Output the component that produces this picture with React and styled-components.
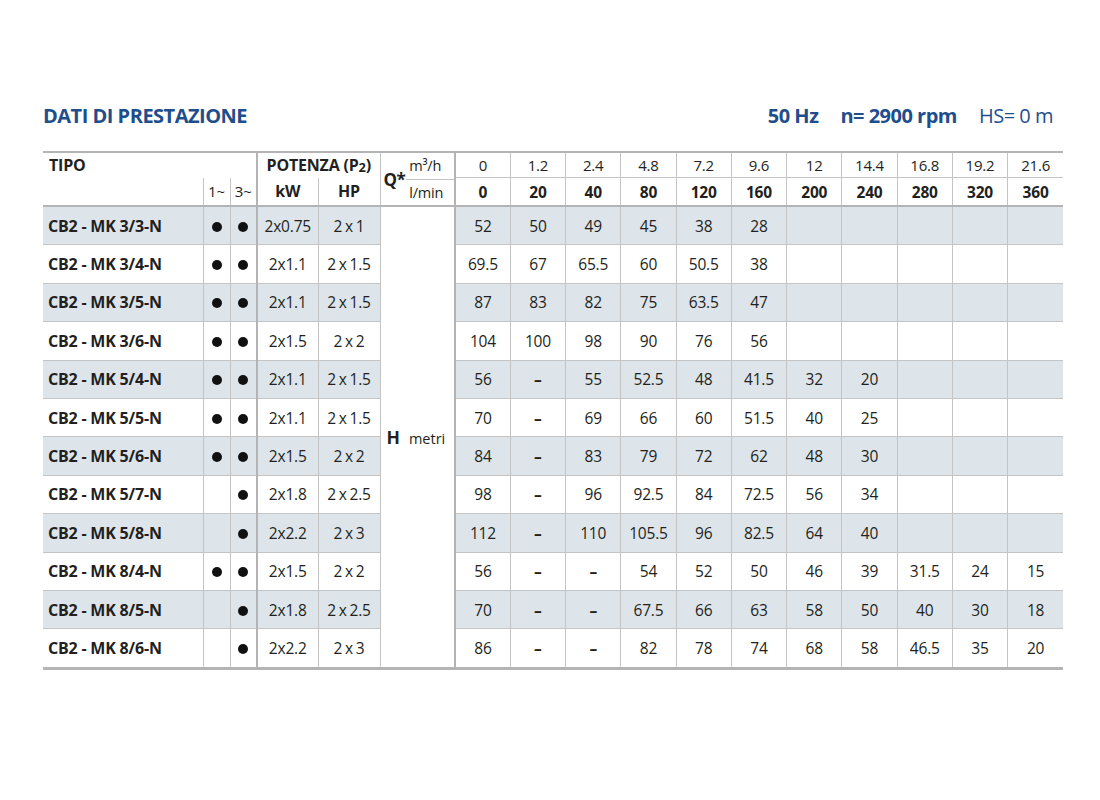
import React from 'react'
import styled, { createGlobalStyle } from 'styled-components'

const GlobalStyle = createGlobalStyle`
    body {
        margin: 0;
        background: #ffffff;
        font-family: "Open Sans", "Noto Sans", sans-serif;
        color: #231f20;
    }
`;

const Page = styled.div`
    width: 1100px;
    height: 800px;
    padding: 102px 37px 0 43px;
    box-sizing: border-box;
`;

const TitleBar = styled.div`
    display: flex;
    justify-content: space-between;
    align-items: baseline;
    height: 49px;
    padding-right: 10px;
    color: #1f4e8d;
`;

const Title = styled.h1`
    margin: 0;
    font-size: 20px;
    font-weight: 700;
    letter-spacing: -0.5px;
`;

const Specs = styled.div`
    display: flex;
    gap: 22px;
    font-size: 20px;
    letter-spacing: -0.5px;
`;

const Spec = styled.span`
    font-weight: ${p => (p.$bold ? 700 : 400)};
`;

const Table = styled.table`
    width: 1020px;
    table-layout: fixed;
    border-collapse: collapse;
    border-top: 2px solid #b4b4b4;
    border-bottom: 3px solid #b4b4b4;
    font-size: 15px;
`;

const HeadCell = styled.th`
    height: ${p => (p.$second ? '26px' : '24px')};
    padding: 0;
    font-weight: ${p => (p.$bold ? 700 : 400)};
    font-size: ${p => (p.$big ? '16px' : p.$bold ? '15.5px' : '15px')};
    text-align: ${p => (p.$left ? 'left' : 'center')};
    padding-left: ${p => (p.$left ? '6px' : '0')};
    border-right: ${p => (p.$noRight ? 'none' : p.$thick ? '2px solid #b4b4b4' : '1px solid #c4c4c4')};
    border-bottom: ${p => (p.$line ? '1px solid #c4c4c4' : 'none')};
    vertical-align: middle;
    white-space: nowrap;
    letter-spacing: -0.2px;
`;

const Sub = styled.span`
    font-size: 0.8em;
    vertical-align: -1px;
`;

const QCell = styled.th`
    padding: 0;
    border-right: 2px solid #b4b4b4;
    font-weight: 400;
`;

const QBox = styled.div`
    display: flex;
    align-items: center;
    height: 52px;
`;

const QMark = styled.span`
    font-weight: 700;
    font-size: 17px;
    padding: 0 1px 0 3px;
    letter-spacing: -0.5px;
`;

const QUnits = styled.div`
    flex: 1;
    display: flex;
    flex-direction: column;
    align-self: stretch;
`;

const QUnit = styled.span`
    flex: 1;
    display: flex;
    align-items: center;
    padding-left: 3px;
    font-size: 14.5px;
    letter-spacing: -0.2px;
    border-bottom: ${p => (p.$line ? '1px solid #c4c4c4' : 'none')};
`;

const HeaderRow = styled.tr`
    border-bottom: ${p => (p.$last ? '2px solid #b4b4b4' : 'none')};
`;

const BodyRow = styled.tr`
    background: ${p => (p.$shaded ? '#dde5eb' : '#ffffff')};
    border-bottom: 1px solid #c4c4c4;
`;

const Cell = styled.td`
    height: 37.4px;
    padding: 0;
    text-align: ${p => (p.$left ? 'left' : 'center')};
    padding-left: ${p => (p.$left ? '5px' : '0')};
    font-weight: ${p => (p.$bold ? 700 : 400)};
    font-size: ${p => (p.$bold ? '16px' : '15.5px')};
    border-right: ${p => (p.$thick ? '2px solid #b4b4b4' : '1px solid #c4c4c4')};
    white-space: nowrap;
    letter-spacing: -0.2px;
    word-spacing: ${p => (p.$spaced ? '-1px' : '0')};
    &:last-child {
        border-right: none;
    }
`;

const HCell = styled.td`
    padding: 0 0 0 6px;
    background: #ffffff;
    border-right: 2px solid #b4b4b4;
    vertical-align: middle;
    white-space: nowrap;
`;

const HLetter = styled.span`
    font-weight: 700;
    font-size: 17.5px;
    margin-right: 9px;
`;

const HUnit = styled.span`
    font-size: 14.5px;
`;

const Dot = styled.span`
    display: inline-block;
    width: 10px;
    height: 10px;
    border-radius: 50%;
    background: #111;
`;

const Dash = styled.span`
    font-weight: 700;
`;

const flowM3 = ['0', '1.2', '2.4', '4.8', '7.2', '9.6', '12', '14.4', '16.8', '19.2', '21.6'];
const flowL = ['0', '20', '40', '80', '120', '160', '200', '240', '280', '320', '360'];

const rows = [
    { name: 'CB2 - MK 3/3-N', one: true, kw: '2x0.75', hp: '2 x 1', h: ['52', '50', '49', '45', '38', '28'] },
    { name: 'CB2 - MK 3/4-N', one: true, kw: '2x1.1', hp: '2 x 1.5', h: ['69.5', '67', '65.5', '60', '50.5', '38'] },
    { name: 'CB2 - MK 3/5-N', one: true, kw: '2x1.1', hp: '2 x 1.5', h: ['87', '83', '82', '75', '63.5', '47'] },
    { name: 'CB2 - MK 3/6-N', one: true, kw: '2x1.5', hp: '2 x 2', h: ['104', '100', '98', '90', '76', '56'] },
    { name: 'CB2 - MK 5/4-N', one: true, kw: '2x1.1', hp: '2 x 1.5', h: ['56', '-', '55', '52.5', '48', '41.5', '32', '20'] },
    { name: 'CB2 - MK 5/5-N', one: true, kw: '2x1.1', hp: '2 x 1.5', h: ['70', '-', '69', '66', '60', '51.5', '40', '25'] },
    { name: 'CB2 - MK 5/6-N', one: true, kw: '2x1.5', hp: '2 x 2', h: ['84', '-', '83', '79', '72', '62', '48', '30'] },
    { name: 'CB2 - MK 5/7-N', one: false, kw: '2x1.8', hp: '2 x 2.5', h: ['98', '-', '96', '92.5', '84', '72.5', '56', '34'] },
    { name: 'CB2 - MK 5/8-N', one: false, kw: '2x2.2', hp: '2 x 3', h: ['112', '-', '110', '105.5', '96', '82.5', '64', '40'] },
    { name: 'CB2 - MK 8/4-N', one: true, kw: '2x1.5', hp: '2 x 2', h: ['56', '-', '-', '54', '52', '50', '46', '39', '31.5', '24', '15'] },
    { name: 'CB2 - MK 8/5-N', one: false, kw: '2x1.8', hp: '2 x 2.5', h: ['70', '-', '-', '67.5', '66', '63', '58', '50', '40', '30', '18'] },
    { name: 'CB2 - MK 8/6-N', one: false, kw: '2x2.2', hp: '2 x 3', h: ['86', '-', '-', '82', '78', '74', '68', '58', '46.5', '35', '20'] },
];

const widths = [160, 27, 27, 61, 62, 75, ...flowM3.map(() => 55.27)];

export default function App() {
    return (
        <Page>
            <GlobalStyle />
            <TitleBar>
                <Title>DATI DI PRESTAZIONE</Title>
                <Specs>
                    <Spec $bold>50 Hz</Spec>
                    <Spec $bold>n= 2900 rpm</Spec>
                    <Spec>HS= 0 m</Spec>
                </Specs>
            </TitleBar>
            <Table>
                <colgroup>
                    {widths.map((w, i) => <col key={i} style={{ width: w }} />)}
                </colgroup>
                <thead>
                    <HeaderRow>
                        <HeadCell colSpan={3} $left $bold $big $thick>TIPO</HeadCell>
                        <HeadCell colSpan={2} $bold $big>POTENZA (P<Sub>2</Sub>)</HeadCell>
                        <QCell rowSpan={2}>
                            <QBox>
                                <QMark>Q*</QMark>
                                <QUnits>
                                    <QUnit $line>m³/h</QUnit>
                                    <QUnit>l/min</QUnit>
                                </QUnits>
                            </QBox>
                        </QCell>
                        {flowM3.map((v, i) => (
                            <HeadCell key={i} $line $noRight={i === flowM3.length - 1}>{v}</HeadCell>
                        ))}
                    </HeaderRow>
                    <HeaderRow $last>
                        <HeadCell $second></HeadCell>
                        <HeadCell $second>1~</HeadCell>
                        <HeadCell $second $thick>3~</HeadCell>
                        <HeadCell $second $bold $big>kW</HeadCell>
                        <HeadCell $second $bold $big>HP</HeadCell>
                        {flowL.map((v, i) => (
                            <HeadCell key={i} $second $bold $noRight={i === flowL.length - 1}>{v}</HeadCell>
                        ))}
                    </HeaderRow>
                </thead>
                <tbody>
                    {rows.map((r, index) => (
                        <BodyRow key={index} $shaded={index % 2 === 0}>
                            <Cell $left $bold>{r.name}</Cell>
                            <Cell>{r.one ? <Dot /> : null}</Cell>
                            <Cell $thick><Dot /></Cell>
                            <Cell>{r.kw}</Cell>
                            <Cell $spaced>{r.hp}</Cell>
                            {index === 0 ? (
                                <HCell rowSpan={rows.length}>
                                    <HLetter>H</HLetter>
                                    <HUnit>metri</HUnit>
                                </HCell>
                            ) : null}
                            {flowM3.map((f, i) => (
                                <Cell key={i}>
                                    {r.h[i] === '-' ? <Dash>–</Dash> : r.h[i] || ''}
                                </Cell>
                            ))}
                        </BodyRow>
                    ))}
                </tbody>
            </Table>
        </Page>
    )
}
